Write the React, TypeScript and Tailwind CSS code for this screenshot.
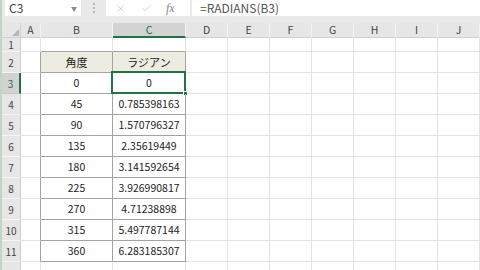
import React from "react";
import { X, Check } from "lucide-react";

const font = { fontFamily: '"Noto Sans CJK JP", "Noto Sans", sans-serif' };

const data: [string, string][] = [
  ["0", "0"],
  ["45", "0.785398163"],
  ["90", "1.570796327"],
  ["135", "2.35619449"],
  ["180", "3.141592654"],
  ["225", "3.926990817"],
  ["270", "4.71238898"],
  ["315", "5.497787144"],
  ["360", "6.283185307"],
];

const rest = ["D", "E", "F", "G", "H", "I", "J"];

function RowHead({ n, sel }: { n?: number; sel?: boolean }) {
  return (
    <div
      className={
        "w-[19px] shrink-0 flex items-center justify-center text-[10px] border-b " +
        (sel
          ? "bg-[#d2d2d2] text-[#217346] border-b-[#c8c8c8] border-r-2 border-r-[#217346]"
          : "bg-[#e6e6e6] text-[#444] border-b-[#f4f4f4] border-r border-r-[#cfcfcf]")
      }
    >
      {n}
    </div>
  );
}

function Blank({ w, dark }: { w: string; dark?: boolean }) {
  return (
    <div
      className={
        w +
        " shrink-0 border-b border-r border-b-[#e3e3e3] " +
        (dark ? "border-r-[#a3a3a3]" : "border-r-[#e3e3e3]")
      }
    />
  );
}

function Rest() {
  return (
    <>
      {rest.map((c) => (
        <Blank key={c} w="w-[42px]" />
      ))}
    </>
  );
}

export default function App() {
  return (
    <div
      className="w-[480px] h-[270px] overflow-hidden bg-[#e9e9e9] border-l-2 border-[#c2d4c6] text-[#222]"
      style={font}
    >
      {/* Formula bar */}
      <div className="h-[23px] flex items-start">
        <div className="ml-[3px] w-[76px] h-[16px] bg-white flex items-center pl-[4px] pr-[4px] text-[12px] text-[#444]">
          <span className="flex-1">C3</span>
          <span className="text-[6px] text-[#8a8a8a]">▼</span>
        </div>
        <div className="w-[25px] h-[16px] flex flex-col items-center justify-center gap-[2px]">
          <span className="w-[2px] h-[2px] bg-[#b8b8b8]" />
          <span className="w-[2px] h-[2px] bg-[#b8b8b8]" />
          <span className="w-[2px] h-[2px] bg-[#b8b8b8]" />
        </div>
        <div className="w-[84px] h-[16px] bg-white flex items-center text-[#a8a8a8]">
          <X size={11} strokeWidth={1.2} className="ml-[9px]" />
          <Check size={11} strokeWidth={1.2} className="ml-[15px]" />
          <span
            className="ml-[14px] text-[12px] italic text-[#8a8a8a]"
            style={{ fontFamily: '"Liberation Serif", serif' }}
          >
            fx
          </span>
        </div>
        <div className="ml-[2px] flex-1 h-[16px] bg-white flex items-center pl-[8px] text-[12px] text-[#555]">
          =RADIANS(B3)
        </div>
      </div>

      {/* Column headers */}
      <div className="flex h-[15px] text-[10.5px] text-[#444]">
        <div className="w-[19px] shrink-0 bg-[#e6e6e6] border-b border-r border-[#cfcfcf] relative">
          <div className="absolute right-[1px] bottom-[1px] w-0 h-0 border-l-[7px] border-l-transparent border-b-[7px] border-b-[#b5b5b5]" />
        </div>
        <div className="w-[20px] shrink-0 bg-[#e6e6e6] border-b border-r border-b-[#cfcfcf] border-r-[#f2f2f2] flex items-center justify-center">A</div>
        <div className="w-[72px] shrink-0 bg-[#e6e6e6] border-b border-r border-b-[#cfcfcf] border-r-[#f2f2f2] flex items-center justify-center">B</div>
        <div className="w-[73px] shrink-0 bg-[#d3d3d3] border-b-2 border-r border-b-[#217346] border-r-[#f2f2f2] flex items-center justify-center text-[#217346]">C</div>
        {rest.map((c) => (
          <div key={c} className="w-[42px] shrink-0 bg-[#e6e6e6] border-b border-r border-b-[#cfcfcf] border-r-[#f2f2f2] flex items-center justify-center">
            {c}
          </div>
        ))}
      </div>

      {/* Row 1 */}
      <div className="flex h-[14px] bg-white">
        <RowHead n={1} />
        <Blank w="w-[20px]" />
        <div className="w-[72px] shrink-0 border-b border-r border-b-[#a3a3a3] border-r-[#e3e3e3]" />
        <div className="w-[73px] shrink-0 border-b border-r border-b-[#a3a3a3] border-r-[#e3e3e3]" />
        <Rest />
      </div>

      {/* Row 2 header */}
      <div className="flex h-[21px] bg-white">
        <RowHead n={2} />
        <Blank w="w-[20px]" dark />
        <div className="w-[72px] shrink-0 bg-[#eeece1] border-b border-r border-[#a3a3a3] flex items-center justify-center text-[11px]">角度</div>
        <div className="w-[73px] shrink-0 bg-[#eeece1] border-b border-r border-[#a3a3a3] flex items-center justify-center text-[11px]">ラジアン</div>
        <Rest />
      </div>

      {data.map(([a, b], i) => (
        <div key={a} className="flex h-[21px] bg-white">
          <RowHead n={i + 3} sel={i === 0} />
          <Blank w="w-[20px]" dark />
          <div className="w-[72px] shrink-0 border-b border-r border-[#a3a3a3] flex items-center justify-center text-[10.5px]">{a}</div>
          <div className="w-[73px] shrink-0 border-b border-r border-[#a3a3a3] flex items-center justify-center text-[10.5px] relative">
            {b}
            {i === 0 && (
              <>
                <div className="absolute left-[-2px] top-[-2px] right-[-1px] bottom-[-1px] border-2 border-[#217346]" />
                <div className="absolute right-[-3px] bottom-[-3px] w-[5px] h-[5px] bg-[#217346] border border-white" />
              </>
            )}
          </div>
          <Rest />
        </div>
      ))}

      {/* Row 12 (partially visible) */}
      <div className="flex h-[21px] bg-white">
        <RowHead />
        <Blank w="w-[20px]" />
        <Blank w="w-[72px]" />
        <Blank w="w-[73px]" />
        <Rest />
      </div>
    </div>
  );
}
